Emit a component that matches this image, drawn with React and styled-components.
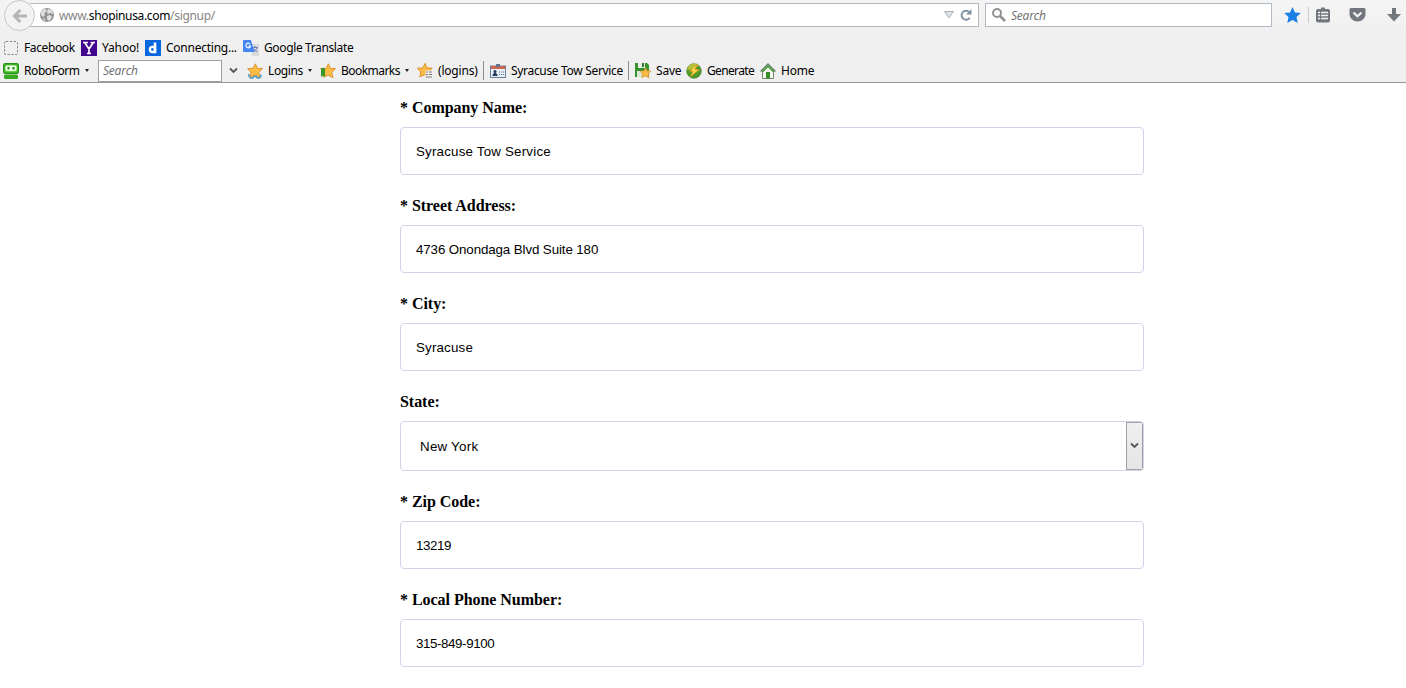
import React from "react";
import styled, { createGlobalStyle } from "styled-components";

const GlobalStyle = createGlobalStyle`
  * { box-sizing: border-box; }
  body { margin: 0; background: #fff; overflow: hidden; }
`;

const Page = styled.div`
  height: 688px;
  overflow: hidden;
  font-family: "Noto Sans", "Open Sans", sans-serif;
  font-size: 12px;
  color: #000;
`;
const Chrome = styled.header`
  height: 83px;
  background: linear-gradient(#f4f4f4, #f0f0f0 34px, #efefef);
  border-bottom: 1px solid #979797;
`;
const NavBar = styled.div`
  display: flex;
  align-items: flex-start;
  height: 36px;
  padding: 3px 0 0 4px;
`;
const BackButton = styled.div`
  width: 31px;
  height: 31px;
  margin-top: -3px;
  flex: none;
  border: 1px solid #c6c6c6;
  border-radius: 50%;
  background: #f3f3f3;
  display: flex;
  align-items: center;
  justify-content: center;
  z-index: 1;
`;
const Box = styled.div`
  display: flex;
  align-items: center;
  height: 24px;
  border: 1px solid #b1bac3;
  background: #fff;
`;
const AddressBox = styled(Box)`
  width: 949px;
  margin-left: -5px;
  padding: 0 5px 0 9px;
  border-left: 0;
`;
const Address = styled.span`
  flex: 1;
  margin-left: 4px;
  color: #858585;
  letter-spacing: ${(p) => p.$track}px;
  b { color: #000; font-weight: 400; }
`;
const SearchBox = styled(Box)`
  width: 287px;
  margin-left: 6px;
  padding-left: 5px;
`;
const Hint = styled.span`
  font-family: "Open Sans", sans-serif;
  font-style: italic;
  color: #6b6b6b;
  letter-spacing: -0.2px;
`;
const Tools = styled.div`
  display: flex;
  align-items: center;
  height: 24px;
  margin-left: 12px;
`;
const ToolRule = styled.i`
  width: 1px;
  height: 16px;
  margin: 0 7px 0 7px;
  background: #c3cdd8;
`;
const Gap = styled.i`
  flex: none;
  width: ${(p) => p.$w}px;
`;
const LinkBar = styled.div`
  display: flex;
  align-items: center;
  height: ${(p) => p.$h}px;
  padding-left: 3px;
`;
const LinkItem = styled.div`
  display: flex;
  align-items: center;
  flex: none;
  width: ${(p) => p.$w}px;
  svg { flex: none; }
`;
const LinkText = styled.span`
  margin-left: 5px;
  white-space: nowrap;
  line-height: 16px;
  letter-spacing: ${(p) => p.$track || 0}px;
`;
const Caret = styled.i`
  border: 2.5px solid transparent;
  border-top: 3px solid #222;
  border-bottom: 0;
  margin-left: 5px;
`;
const FillSearch = styled.div`
  width: 124px;
  height: 22px;
  padding-left: 4px;
  display: flex;
  align-items: center;
  background: #fff;
  border: 1px solid #a0a0a0;
`;
const BarRule = styled.i`
  width: 1px;
  height: 19px;
  background: #8c8c8c;
  margin-right: 5px;
`;
const Form = styled.main`
  width: 744px;
  margin: 14px 0 0 400px;
`;
const Field = styled.div`
  margin-bottom: 20px;
`;
const FieldLabel = styled.label`
  display: block;
  height: 30px;
  font: bold 16px/22px "Liberation Serif", serif;
  letter-spacing: -0.04px;
`;
const Control = styled.div`
  display: flex;
  align-items: center;
  height: ${(p) => (p.$select ? 50 : 48)}px;
  padding-left: ${(p) => (p.$select ? 19 : 15)}px;
  border: 1px solid #d3d3e7;
  border-radius: 4px;
  overflow: hidden;
  font: 13.33px "Liberation Sans", sans-serif;
`;
const Value = styled.span`
  flex: 1;
  letter-spacing: ${(p) => p.$track || 0}px;
`;
const SelectButton = styled.div`
  width: 17px;
  height: 48px;
  border: 1px solid #a0a0a0;
  background: linear-gradient(#f0f0f0, #e5e5e5);
  display: flex;
  align-items: center;
  justify-content: center;
`;

const Icon = ({ w = 16, h = 16, children }) => (
  <svg width={w} height={h} viewBox={`0 0 ${w} ${h}`} fill="none">{children}</svg>
);
const STAR = "M8.500 .8l1.600 4.500 5.400 .2-3.700 3.900 1.200 5.200L8 12.200l-4.800 2 .8-4.900L.6 5.600l5.200-.2z";
const GoldStar = ({ t }) => <path d={STAR} transform={t} fill="#fbbb45" stroke="#dc9431" strokeWidth="1" />;

const Chevron = () => <Icon w={9} h={8}><path d="M1 1.500l3.500 3.500L8 1.500" stroke="#555" strokeWidth="1.800" /></Icon>;
const BackArrow = () => <Icon><path d="M8.300 2L2.500 8l5.800 6M3 8h12" stroke="#b5b5b5" strokeWidth="3" /></Icon>;
const Globe = () => (
  <Icon><circle cx="8" cy="8" r="7" fill="#949494" />
    <path d="M2 5l3-3 3 1-1 2-2 1 1 2-2 2-2-2zM9 2l4 1 1 4-3-1-2 1-1-2zM8 9l3-1 2 2-2 3-2 1-1-3zM3 11l3 1v2z" fill="#e0e0e0" /></Icon>
);
const Reload = () => (
  <Icon w={14} h={14}><path d="M10.800 9.800A4.500 4.500 0 1 1 10.200 4" stroke="#8493a3" strokeWidth="2" /><path d="M12.500 1v5.500H7z" fill="#8493a3" /></Icon>
);
const Magnifier = () => <Icon><circle cx="6" cy="6" r="4" stroke="#929292" strokeWidth="2" /><path d="M9 9l5 5" stroke="#929292" strokeWidth="2.600" /></Icon>;
const BlueStar = () => <Icon w={17}><path d="M8.500 0l2.500 5.400 5.800.7-4.300 4 1.200 5.900-5.200-3-5.200 3 1.200-5.900-4.300-4L6 5.400z" fill="#1a80e5" /></Icon>;
const Clipboard = () => (
  <Icon w={14}><path d="M5 .5h4V3H5z" fill="#72777d" /><rect y="2" width="14" height="13.500" rx="2" fill="#72777d" />
    <path d="M2 5.500h2M5 5.500h7M2 8.500h2M5 8.500h7M2 11.500h2M5 11.500h7" stroke="#f4f4f4" strokeWidth="1.600" /></Icon>
);
const PocketIcon = () => (
  <Icon w={17}><path d="M2 1h13q1.500 0 1.500 1.500V7c0 4-3.600 7.500-8 7.500S.5 11 .5 7V2.500Q.5 1 2 1z" fill="#72777d" /><path d="M4.500 5.500l4 3.800 4-3.800" stroke="#f4f4f4" strokeWidth="2.200" /></Icon>
);
const Download = () => <Icon w={14}><path d="M5 1h4v6h5l-7 7.500L0 7h5z" fill="#72777d" /></Icon>;
const Dashed = () => <Icon><rect x="1.500" y="1.500" width="13" height="13" rx="1.500" stroke="#858585" strokeDasharray="2.300 1.500" /></Icon>;
const Yahoo = () => <Icon><path d="M0 0h16v16H0z" fill="#43068f" /><path d="M2 2.500h5M9.500 2.500H14M4 3l4 6 4-6M8 8.500V14M6 13.500h4" stroke="#fff" strokeWidth="1.700" /></Icon>;
const Delicious = () => <Icon><path d="M0 0h16v16H0z" fill="#0866de" /><circle cx="7.500" cy="9.500" r="2.600" stroke="#fff" strokeWidth="2.400" /><path d="M10 2.500V13.300" stroke="#fff" strokeWidth="2.600" /></Icon>;
const Translate = () => (
  <Icon><path d="M6 4h9q1 0 1 1v10q0 1-1 1H9z" fill="#dadada" /><path d="M9 7.500h6M12 6v1.500M14 8q-1 3-4 4M10.500 8.500q1 2 4 3.500" stroke="#6985ad" />
    <path d="M1 0h7l3.500 12H1q-1 0-1-1V1q0-1 1-1z" fill="#4385f5" /><path d="M7.200 4.300A2.300 2.300 0 1 0 7.500 6H5.500" stroke="#fff" strokeWidth="1.200" /></Icon>
);
const Robo = () => (
  <Icon><rect x=".7" y=".7" width="14.600" height="9.600" rx="1.500" fill="#5fce39" stroke="#22921a" strokeWidth="1.400" /><rect x="2.500" y="2.500" width="11" height="5.500" rx="1.800" fill="#effee8" />
    <path d="M4.500 4h2v2.500h-2zM9.500 4h2v2.500h-2z" fill="#228715" /><rect x="1" y="11.500" width="14" height="4.500" rx="1.500" fill="#35aa20" /></Icon>
);
const LoginsStar = () => <Icon><GoldStar /><path d="M2 11c-1 4 4 6 5 2M9 12.500c1 4 6 3 4.500-1M6.500 13.500h3" stroke="#4f9fc9" strokeWidth="1.600" /></Icon>;
const BookmarksStar = () => <Icon><GoldStar /><path d="M1 5h4v9l-2-1.500L1 14z" fill="#3c9727" /></Icon>;
const ListStar = () => <Icon><GoldStar t="translate(-.3 -.4)" /><path d="M8.500 7.500H16V16H8.500z" fill="#f1f1f1" /><path d="M9 9h2M12 9h3M9 11.500h2M12 11.500h3M9 14h6" stroke="#777c77" /></Icon>;
const Card = () => (
  <Icon><rect x=".5" y="3" width="15" height="11.500" fill="#e9eff8" stroke="#6e7f99" /><path d="M1 3h14v3H1z" fill="#ce684c" /><path d="M6 1h4v3H6z" fill="#61738c" />
    <circle cx="5" cy="8.500" r="1.500" fill="#263959" /><path d="M2.500 13q0-3 2.500-3t2.500 3z" fill="#263959" /><path d="M9 9h5M9 11.500h5" stroke="#61738c" strokeDasharray="1 1" /></Icon>
);
const SaveIcon = () => <Icon><path d="M0 0h12l2 2v12H0z" fill="#36922c" /><path d="M3 0h7v5H3z" fill="#e9f1e7" /><path d="M7 0h2v4H7z" fill="#37742f" /><path d="M2 8h9v6H2z" fill="#dce9d8" /><GoldStar t="translate(4.500 4) scale(.74)" /></Icon>;
const Bolt = () => <Icon><circle cx="8" cy="8" r="7.300" fill="#4f9b29" stroke="#33751c" strokeWidth=".6" /><path d="M1 7C2 1 8-1 13 2.500L8 6z" fill="#b8bf38" /><path d="M11.500 1L3.500 8.500H7L4 14l9.500-7.500H9z" fill="#ffda4a" stroke="#ce8d1b" strokeWidth=".7" /></Icon>;
const House = () => <Icon><path d="M2.500 7V15.500h11V7L8 1.500z" fill="#f5f5ef" stroke="#7b8178" /><path d="M.5 8.500L8 1 15.500 8.500" stroke="#6d846a" strokeWidth="1.400" /><path d="M2.500 8.700L8 3.300l5.500 5.400" stroke="#3b9b30" strokeWidth="1.400" /><path d="M6 9h4v6.500H6z" fill="#358c27" /></Icon>;

const links = [
  { w: 78, icon: <Dashed />, text: "Facebook", track: -0.38 },
  { w: 64, icon: <Yahoo />, text: "Yahoo!", track: -0.15 },
  { w: 98, icon: <Delicious />, text: "Connecting...", track: -0.25 },
  { w: 120, icon: <Translate />, text: "Google Translate", track: -0.37 },
];
const fields = [
  { label: "* Company Name:", value: "Syracuse Tow Service", track: 0.2 },
  { label: "* Street Address:", value: "4736 Onondaga Blvd Suite 180", track: -0.11 },
  { label: "* City:", value: "Syracuse", track: 0.18 },
  { label: "State:", value: "New York", select: true, track: 0.25 },
  { label: "* Zip Code:", value: "13219", track: -0.4 },
  { label: "* Local Phone Number:", value: "315-849-9100", track: -0.4 },
];
const Entry = ({ w, icon, text, track, menu }) => (
  <LinkItem $w={w}>{icon}<LinkText $track={track}>{text}</LinkText>{menu && <Caret />}</LinkItem>
);

export default function App() {
  return (
    <Page>
      <GlobalStyle />
      <Chrome>
        <NavBar>
          <BackButton><BackArrow /></BackButton>
          <AddressBox>
            <Globe />
            <Address $track={-0.33}>www.<b>shopinusa.com</b>/signup/</Address>
            <Icon w={10} h={8}><path d="M.5.500h9L5 7z" fill="#dce2e8" stroke="#a7b1bc" /></Icon>
            <Gap $w={5} /><Reload />
          </AddressBox>
          <SearchBox><Magnifier /><Gap $w={4} /><Hint>Search</Hint></SearchBox>
          <Tools>
            <BlueStar /><ToolRule /><Clipboard /><Gap $w={19} /><PocketIcon /><Gap $w={21} /><Download />
          </Tools>
        </NavBar>
        <LinkBar $h={23}>{links.map((l) => <Entry key={l.text} {...l} />)}</LinkBar>
        <LinkBar $h={23}>
          <Entry w={95} icon={<Robo />} text="RoboForm" track={-0.42} menu />
          <FillSearch><Hint>Search</Hint></FillSearch>
          <Gap $w={7} /><Chevron /><Gap $w={9} />
          <Entry w={73} icon={<LoginsStar />} text="Logins" track={-0.38} menu />
          <Entry w={97} icon={<BookmarksStar />} text="Bookmarks" track={-0.55} menu />
          <Entry w={66} icon={<ListStar />} text="(logins)" track={-0.2} />
          <BarRule />
          <Gap $w={1} />
          <Entry w={138} icon={<Card />} text="Syracuse Tow Service" track={-0.32} />
          <BarRule />
          <Gap $w={1} />
          <Entry w={51} icon={<SaveIcon />} text="Save" track={-0.2} />
          <Entry w={74} icon={<Bolt />} text="Generate" track={-0.65} />
          <Entry w={60} icon={<House />} text="Home" track={-0.2} />
        </LinkBar>
      </Chrome>
      <Form>
        {fields.map((f) => (
          <Field key={f.label}>
            <FieldLabel>{f.label}</FieldLabel>
            <Control $select={f.select}>
              <Value $track={f.track}>{f.value}</Value>
              {f.select && <SelectButton><Chevron /></SelectButton>}
            </Control>
          </Field>
        ))}
      </Form>
    </Page>
  );
}
